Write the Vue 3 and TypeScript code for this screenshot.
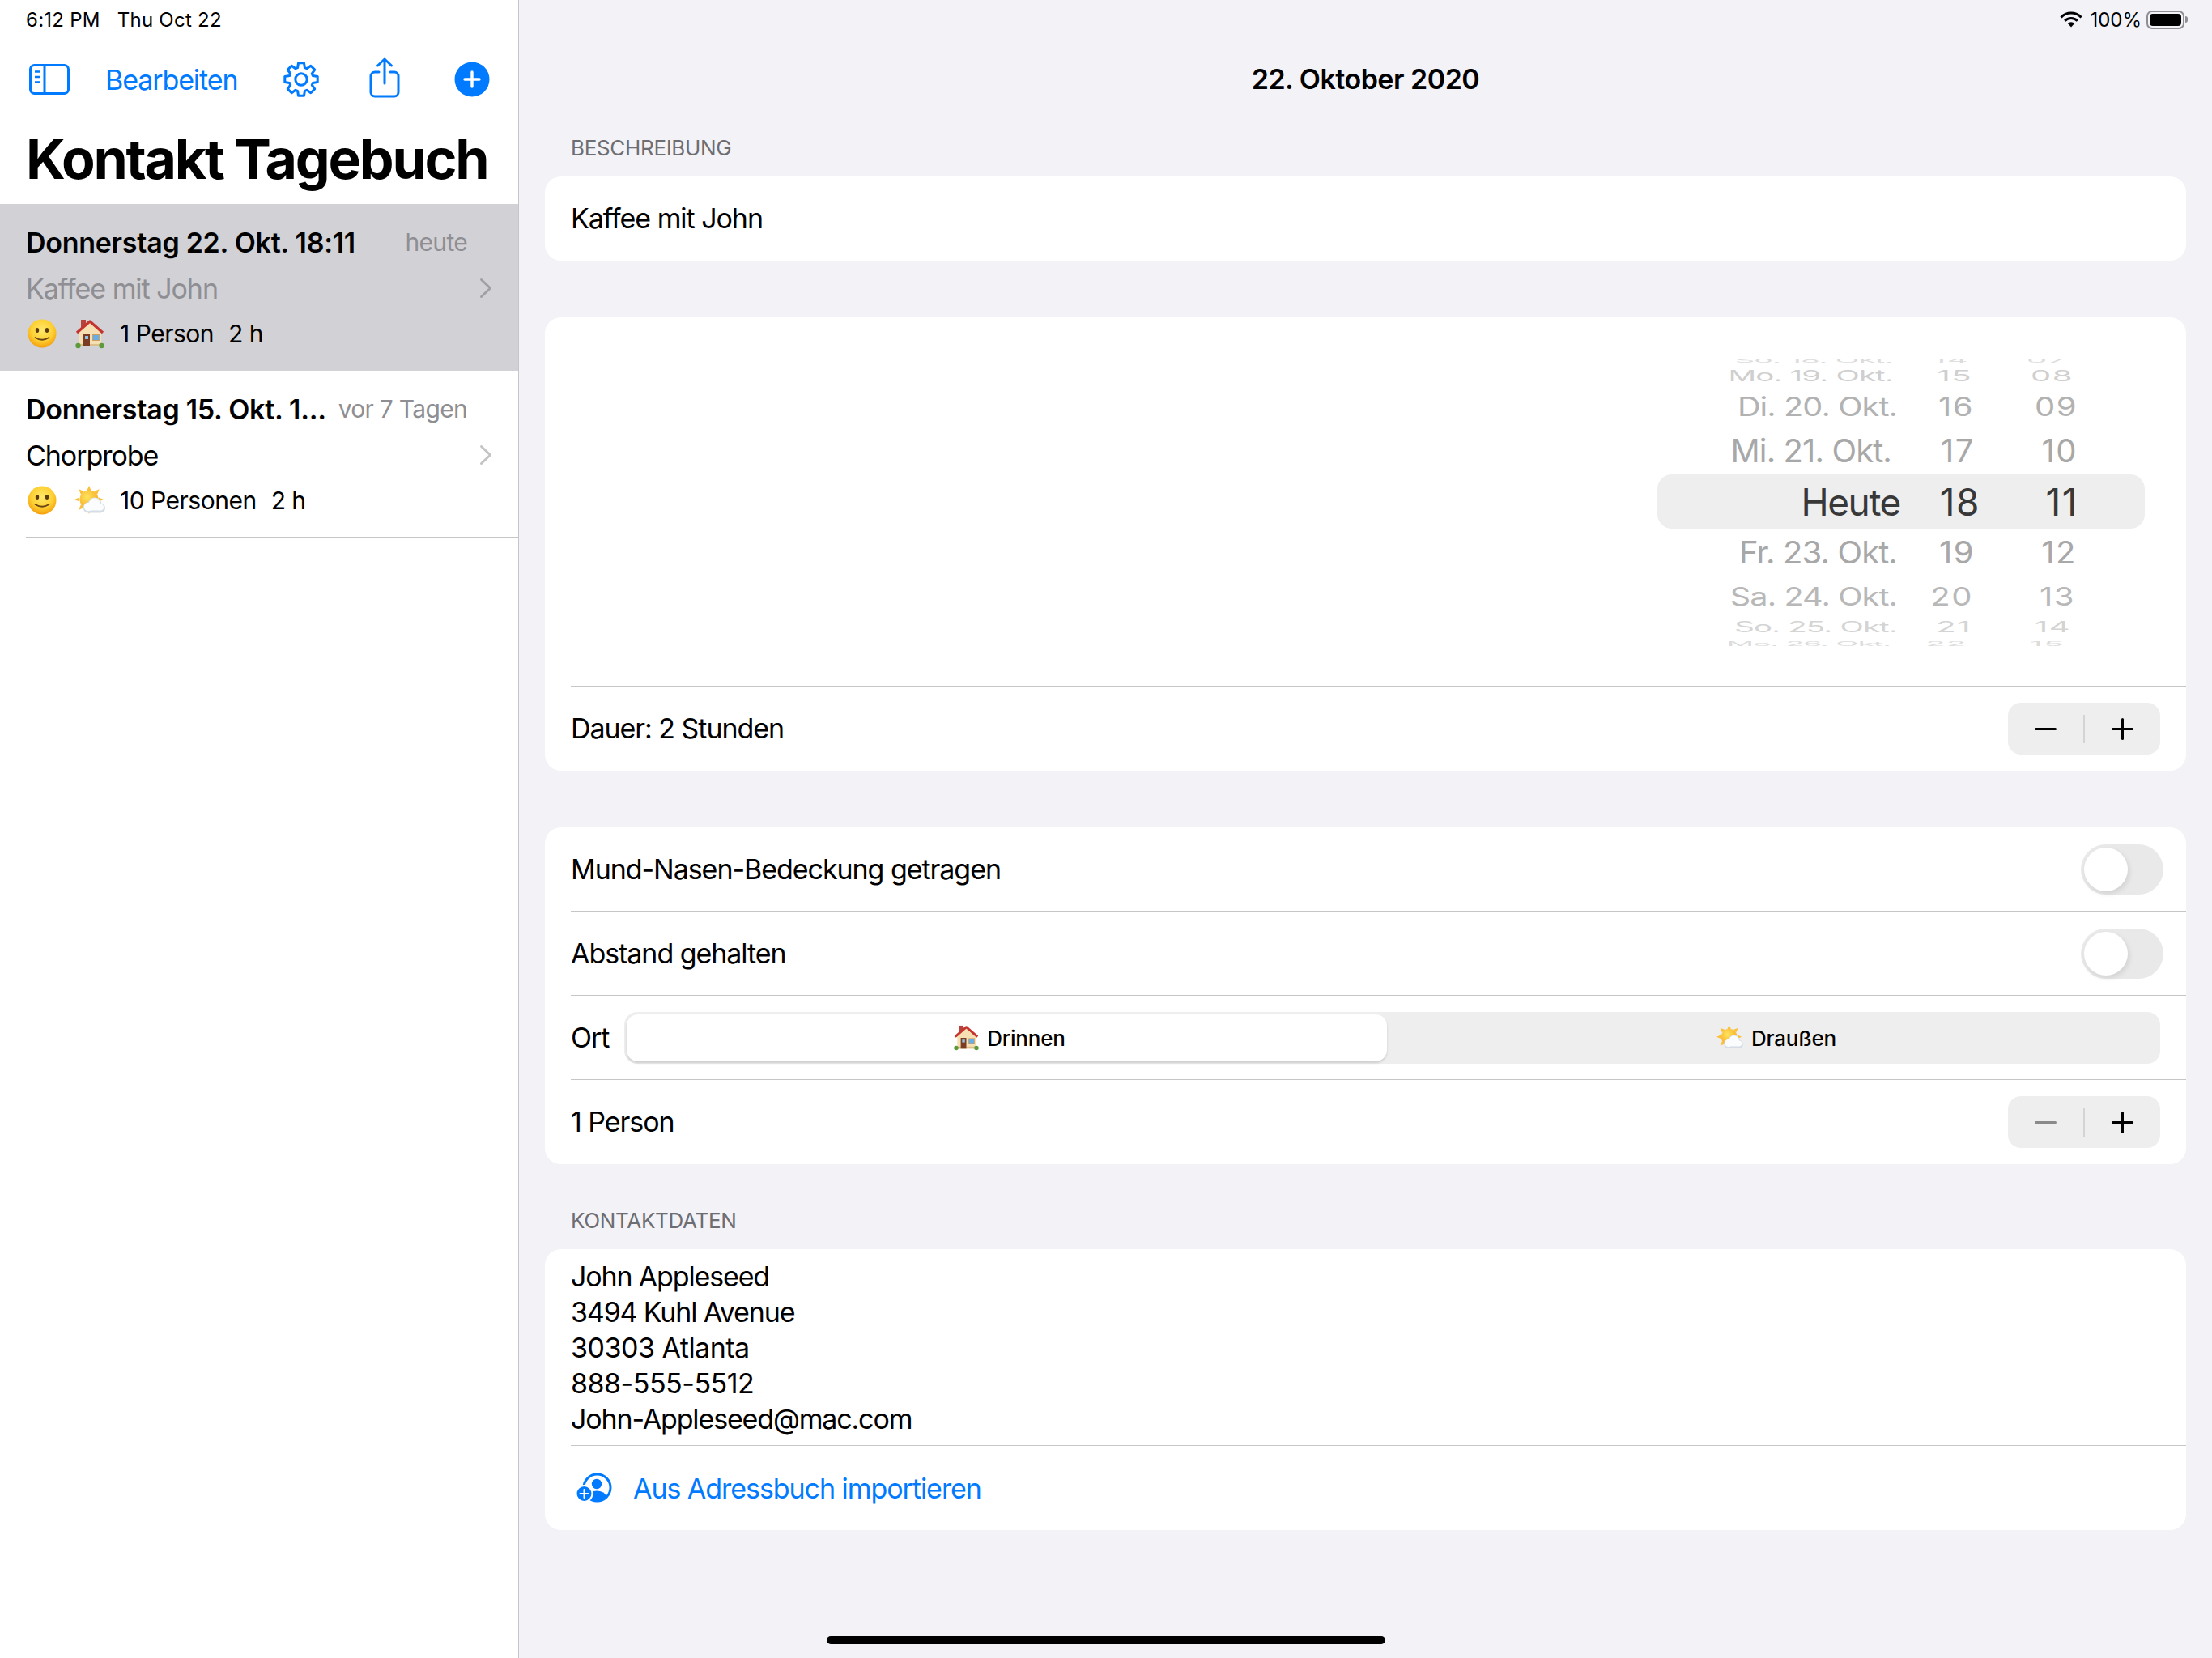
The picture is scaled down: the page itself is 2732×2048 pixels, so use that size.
<template>
    <div class="ipad">
        <!-- shared emoji drawings -->
        <svg class="defs" width="0" height="0" aria-hidden="true">
            <defs>
                <radialGradient id="smileFill" cx="50%" cy="38%" r="62%">
                    <stop offset="0%" stop-color="#ffe86a" />
                    <stop offset="62%" stop-color="#fdd033" />
                    <stop offset="100%" stop-color="#f59e0b" />
                </radialGradient>
                <radialGradient id="sunFill" cx="40%" cy="35%" r="70%">
                    <stop offset="0%" stop-color="#ffe45c" />
                    <stop offset="100%" stop-color="#f7a823" />
                </radialGradient>
                <symbol id="e-smile" viewBox="0 0 36 36">
                    <circle cx="18" cy="18" r="17.5" fill="url(#smileFill)" />
                    <ellipse cx="12" cy="14" rx="2.2" ry="3" fill="#5b3a12" />
                    <ellipse cx="24" cy="14" rx="2.2" ry="3" fill="#5b3a12" />
                    <path d="M9.5 23 Q18 28.5 26.5 23" fill="none" stroke="#6b4415" stroke-width="1.8" stroke-linecap="round" />
                </symbol>
                <symbol id="e-house" viewBox="0 0 36 37">
                    <rect x="7" y="1" width="6" height="10" fill="#b8433c" />
                    <path d="M18 4 L32 16 V34 H5 V16 Z" fill="#f6dfb2" />
                    <rect x="5" y="31" width="27" height="3" fill="#dcc08c" />
                    <path d="M2 17 L18 3 L34 17" fill="none" stroke="#c5352f" stroke-width="3.4" stroke-linejoin="round" />
                    <rect x="10" y="18.5" width="8" height="15.5" fill="#7b3c24" />
                    <rect x="12" y="21" width="4" height="4" fill="#8fc3e8" />
                    <rect x="21" y="19" width="9" height="8" fill="#c99f62" />
                    <rect x="22" y="20" width="7" height="6" fill="#68aee6" />
                    <circle cx="3.5" cy="33" r="3.2" fill="#5d9b3a" />
                    <circle cx="32.5" cy="33" r="3.2" fill="#5d9b3a" />
                </symbol>
                <symbol id="e-sun" viewBox="0 0 38 37">
                    <g fill="#fbbf3a">
                        <path d="M18 0 L20.6 6 H15.4 Z" />
                        <path d="M18 35 L20.6 28 H15.4 Z" />
                        <path d="M0 17 L6 14.4 V19.6 Z" />
                        <path d="M36 17 L30 14.4 V19.6 Z" />
                        <path d="M5.3 4.3 L12 7 L8 11 Z" />
                        <path d="M30.7 4.3 L24 7 L28 11 Z" />
                        <path d="M5.3 29.7 L8 23 L12 27 Z" />
                    </g>
                    <circle cx="18" cy="17" r="11.5" fill="url(#sunFill)" />
                    <g fill="#d5dde6">
                        <circle cx="17" cy="27" r="6.5" />
                        <circle cx="25" cy="23" r="8.5" />
                        <circle cx="32.5" cy="27.5" r="5.5" />
                        <rect x="17" y="27" width="16" height="6.5" />
                    </g>
                    <g fill="#fbfcfe">
                        <circle cx="17" cy="26" r="5.2" />
                        <circle cx="25" cy="22.5" r="7.2" />
                        <circle cx="32" cy="26.5" r="4" />
                        <rect x="17" y="25" width="15" height="5.5" />
                    </g>
                </symbol>
            </defs>
        </svg>

        <aside class="sidebar">
            <div class="status-left">
                <span>6:12 PM</span>
                <span>Thu Oct 22</span>
            </div>
            <div class="toolbar">
                <svg class="tool-sidebar" width="52" height="40" viewBox="0 0 52 40" fill="none" stroke="#007aff" stroke-width="3">
                    <rect x="2.5" y="2.5" width="47" height="35" rx="5" />
                    <path d="M20 2.5 V37.5" />
                    <path d="M8 10.5 H14 M8 17 H14 M8 23.5 H14" stroke-width="2.4" />
                </svg>
                <span class="tool-edit">Bearbeiten</span>
                <svg class="tool-gear" width="48" height="48" viewBox="0 0 48 48" fill="none" stroke="#007aff" stroke-width="3" stroke-linejoin="round">
                    <path :d="gearPath" />
                    <circle cx="24" cy="24" r="7.2" />
                </svg>
                <svg class="tool-share" width="40" height="52" viewBox="0 0 40 52" fill="none" stroke="#007aff" stroke-width="3" stroke-linecap="round" stroke-linejoin="round">
                    <path d="M13 19 H8 a5 5 0 0 0 -5 5 V44 a5 5 0 0 0 5 5 H32 a5 5 0 0 0 5 -5 V24 a5 5 0 0 0 -5 -5 H27" />
                    <path d="M20 33 V4 M11.5 11 L20 3 L28.5 11" />
                </svg>
                <svg class="tool-add" width="44" height="44" viewBox="0 0 44 44">
                    <circle cx="22" cy="22" r="21.5" fill="#007aff" />
                    <path d="M22 13 V31 M13 22 H31" stroke="#fff" stroke-width="3.4" stroke-linecap="round" />
                </svg>
            </div>
            <h1 class="big-title">Kontakt Tagebuch</h1>

            <div v-for="entry in entries" :key="entry.title" class="entry" :class="{ selected: entry.selected }">
                <div class="entry-top">
                    <span class="entry-date">{{ entry.date }}</span>
                    <span class="entry-age">{{ entry.age }}</span>
                </div>
                <div class="entry-middle">
                    <span class="entry-title">{{ entry.title }}</span>
                    <svg class="chevron" width="16" height="26" viewBox="0 0 16 26" fill="none" stroke-width="3" stroke-linecap="round" stroke-linejoin="round">
                        <path d="M2.5 2.5 L13.5 13 L2.5 23.5" />
                    </svg>
                </div>
                <div class="entry-bottom">
                    <svg class="emoji-smile"><use href="#e-smile" /></svg>
                    <svg class="emoji-place"><use :href="entry.place" /></svg>
                    <span class="entry-people">{{ entry.people }}</span>
                    <span>{{ entry.hours }}</span>
                </div>
            </div>
        </aside>

        <main class="detail">
            <div class="status-right">
                <svg width="28" height="20" viewBox="0 0 28 20">
                    <g fill="none" stroke="#000" stroke-width="3">
                        <path d="M1.5 7.5 A17 17 0 0 1 26.5 7.5" />
                        <path d="M6.2 11.7 A11 11 0 0 1 21.8 11.7" />
                    </g>
                    <path d="M14 19.5 L9.8 15 A6 6 0 0 1 18.2 15 Z" fill="#000" />
                </svg>
                <span>100%</span>
                <div class="battery"><div class="battery-fill"></div></div>
                <div class="battery-nub"></div>
            </div>
            <div class="nav-title">22. Oktober 2020</div>

            <div class="content">
                <div class="section-head first">BESCHREIBUNG</div>
                <section class="card">
                    <div class="row first-row"><span>Kaffee mit John</span></div>
                </section>

                <section class="card spaced">
                    <div class="picker">
                        <div class="wheel">
                            <div class="wheel-band"></div>
                            <div v-for="item in wheel" :key="item.day" class="wheel-row" :style="{ height: item.height + 'px', color: item.color }">
                                <span :class="{ current: item.current }" :style="cellStyle(item, item.edges[0] - 2345, item.stretch)">{{ item.day }}</span>
                                <span class="num" :class="{ current: item.current }" :style="cellStyle(item, item.edges[1] - 2444)">{{ item.hour }}</span>
                                <span class="num" :class="{ current: item.current }" :style="cellStyle(item, item.edges[2] - 2565)">{{ item.minute }}</span>
                            </div>
                        </div>
                    </div>
                    <div class="row">
                        <span>Dauer: 2 Stunden</span>
                        <div class="stepper">
                            <button class="step"><span class="minus"></span></button>
                            <i class="step-line"></i>
                            <button class="step"><span class="plus"></span></button>
                        </div>
                    </div>
                </section>

                <section class="card spaced-more">
                    <div class="row first-row">
                        <span>Mund-Nasen-Bedeckung getragen</span>
                        <div class="toggle"><div class="knob"></div></div>
                    </div>
                    <div class="row">
                        <span>Abstand gehalten</span>
                        <div class="toggle"><div class="knob"></div></div>
                    </div>
                    <div class="row">
                        <span>Ort</span>
                        <div class="segments">
                            <div class="segment active">
                                <svg class="seg-house"><use href="#e-house" /></svg>
                                <span>Drinnen</span>
                            </div>
                            <div class="segment">
                                <svg class="seg-sun"><use href="#e-sun" /></svg>
                                <span>Draußen</span>
                            </div>
                        </div>
                    </div>
                    <div class="row">
                        <span>1 Person</span>
                        <div class="stepper">
                            <button class="step"><span class="minus off"></span></button>
                            <i class="step-line"></i>
                            <button class="step"><span class="plus"></span></button>
                        </div>
                    </div>
                </section>

                <div class="section-head">KONTAKTDATEN</div>
                <section class="card">
                    <div class="address">
                        <div v-for="line in address" :key="line.text" :class="{ digits: line.digits }">{{ line.text }}</div>
                    </div>
                    <div class="row import-row">
                        <svg width="44" height="38" viewBox="0 0 44 38">
                            <circle cx="25.5" cy="18.5" r="16.5" fill="none" stroke="#007aff" stroke-width="3" />
                            <circle cx="25" cy="14" r="6.2" fill="#007aff" />
                            <path d="M13.5 29 Q16 22.5 25 22.5 Q34 22.5 37 29 A16.5 16.5 0 0 1 13.5 29 Z" fill="#007aff" />
                            <circle cx="9.5" cy="26" r="11" fill="#fff" />
                            <circle cx="9.5" cy="26" r="9" fill="#007aff" />
                            <path d="M9.5 21 V31 M4.5 26 H14.5" stroke="#fff" stroke-width="2" stroke-linecap="round" />
                        </svg>
                        <span>Aus Adressbuch importieren</span>
                    </div>
                </section>
            </div>
        </main>

        <div class="home-bar"></div>
    </div>
</template>

<script setup lang="ts">
interface WheelItem {
    day: string;
    hour: string;
    minute: string;
    height: number;
    squash: number;
    stretch: number;
    color: string;
    edges: [number, number, number];
    current?: boolean;
}

const entries = [
    {
        date: "Donnerstag 22. Okt. 18:11",
        age: "heute",
        title: "Kaffee mit John",
        place: "#e-house",
        people: "1 Person",
        hours: "2 h",
        selected: true,
    },
    {
        date: "Donnerstag 15. Okt. 1...",
        age: "vor 7 Tagen",
        title: "Chorprobe",
        place: "#e-sun",
        people: "10 Personen",
        hours: "2 h",
        selected: false,
    },
];

const address = [
    { text: "John Appleseed", digits: false },
    { text: "3494 Kuhl Avenue", digits: false },
    { text: "30303 Atlanta", digits: true },
    { text: "888-555-5512", digits: true },
    { text: "John-Appleseed@mac.com", digits: false },
];

// row heights and squash fake the cylinder of the date wheel
const wheel: WheelItem[] = [
    { day: "So. 18. Okt.", hour: "14", minute: "07", height: 4, squash: 0.2, stretch: 0.97, color: "#dcdcdc", edges: [2338, 2430, 2551] },
    { day: "Mo. 19. Okt.", hour: "15", minute: "08", height: 34, squash: 0.48, stretch: 0.96, color: "#cfcfcf", edges: [2338, 2434, 2559] },
    { day: "Di. 20. Okt.", hour: "16", minute: "09", height: 44, squash: 0.82, stretch: 0.99, color: "#b2b2b2", edges: [2343, 2436, 2564] },
    { day: "Mi. 21. Okt.", hour: "17", minute: "10", height: 64, squash: 1, stretch: 1, color: "#a8a8a8", edges: [2336, 2437, 2564] },
    { day: "Heute", hour: "18", minute: "11", height: 62, squash: 1, stretch: 1, color: "#383838", edges: [2347, 2444, 2565], current: true },
    { day: "Fr. 23. Okt.", hour: "19", minute: "12", height: 64, squash: 0.96, stretch: 1, color: "#a8a8a8", edges: [2343, 2437, 2563] },
    { day: "Sa. 24. Okt.", hour: "20", minute: "13", height: 44, squash: 0.78, stretch: 0.99, color: "#b8b8b8", edges: [2343, 2435, 2561] },
    { day: "So. 25. Okt.", hour: "21", minute: "14", height: 32, squash: 0.46, stretch: 0.96, color: "#d4d4d4", edges: [2343, 2433, 2556] },
    { day: "Mo. 26. Okt.", hour: "22", minute: "15", height: 8, squash: 0.18, stretch: 0.92, color: "#dcdcdc", edges: [2335, 2428, 2548] },
];

const cellStyle = (item: WheelItem, shift: number, stretch = 1) => ({
    transform: `translateX(${shift}px) scale(${stretch}, ${item.squash})`,
});

// 8 teeth, first one pointing straight up
const makeGear = (): string => {
    const outer = 20.5;
    const inner = 15;
    const point = (r: number, a: number) => `${(24 + r * Math.cos(a)).toFixed(2)} ${(24 + r * Math.sin(a)).toFixed(2)}`;
    let d = "";
    for (let i = 0; i < 8; i++) {
        const a = (i * Math.PI) / 4 - Math.PI / 2;
        d += `${i === 0 ? "M" : `A${inner} ${inner} 0 0 1 `}${point(inner, a - 0.3)} `;
        d += `L${point(outer, a - 0.17)} L${point(outer, a + 0.17)} L${point(inner, a + 0.3)} `;
    }
    return `${d}A${inner} ${inner} 0 0 1 ${point(inner, -Math.PI / 2 - 0.3)} Z`;
};

const gearPath = makeGear();
</script>

<style scoped>
.ipad {
    position: relative;
    display: flex;
    width: 2732px;
    height: 2048px;
    overflow: hidden;
    background: #f2f2f7;
    color: #000;
    font-family: Inter, "Noto Sans", sans-serif;
    font-size: 34px;
}

.defs {
    position: absolute;
}

.sidebar {
    flex: 0 0 641px;
    box-sizing: border-box;
    background: #fff;
    border-right: 1px solid #c6c6c8;
}

.status-left {
    display: flex;
    gap: 21px;
    align-items: center;
    height: 48px;
    padding-left: 32px;
    font-size: 24px;
    letter-spacing: 0.25px;
}

.toolbar {
    display: flex;
    align-items: center;
    height: 100px;
    padding-left: 35px;
    color: #007aff;
}

.tool-edit {
    width: 163px;
    margin-left: 43px;
    letter-spacing: -1.1px;
    white-space: nowrap;
}

.tool-gear {
    margin-left: 55px;
}

.tool-share {
    margin-left: 59px;
    margin-top: -4px;
}

.tool-add {
    margin-left: 66px;
}

.big-title {
    height: 104px;
    margin: 0;
    padding-left: 32px;
    font-size: 68px;
    font-weight: 700;
    line-height: 96px;
    letter-spacing: -2.25px;
    white-space: nowrap;
}

.entry {
    display: grid;
    grid-template-rows: 40px 40px 40px;
    row-gap: 16px;
    height: 206px;
    box-sizing: border-box;
    padding: 28px 32px 0;
}

.entry + .entry {
    border-bottom: 1px solid #c6c6c8;
    margin-left: 32px;
    padding-left: 0;
    padding-right: 32px;
}

.entry.selected {
    background: #d1d1d6;
}

.entry-top {
    display: flex;
    align-items: center;
    justify-content: space-between;
    margin-top: -2px;
    padding-right: 31px;
}

.entry-date {
    font-weight: 600;
    letter-spacing: -0.27px;
    white-space: nowrap;
}

.entry-age {
    color: #8e8e93;
    font-size: 30px;
    letter-spacing: -0.7px;
}

.entry-middle {
    display: flex;
    align-items: center;
    justify-content: space-between;
    letter-spacing: -1.05px;
}

.chevron {
    stroke: #c4c4c7;
}

.selected .chevron {
    stroke: #a0a0a5;
}

.entry.selected .entry-title {
    color: #8e8e93;
}

.entry-bottom {
    display: flex;
    align-items: center;
    font-size: 30px;
    letter-spacing: -0.5px;
}

.emoji-smile {
    width: 36px;
    height: 36px;
    margin-left: 2px;
}

.emoji-place {
    width: 38px;
    height: 37px;
    margin-left: 22px;
}

.entry-people {
    margin-left: 18px;
    margin-right: 18px;
}

.detail {
    flex: 1;
    min-width: 0;
}

.status-right {
    display: flex;
    align-items: center;
    justify-content: flex-end;
    height: 48px;
    padding-right: 30px;
    font-size: 24px;
}

.status-right span {
    margin-left: 9px;
    margin-right: 6px;
}

.battery {
    box-sizing: border-box;
    width: 47px;
    height: 23px;
    padding: 2px;
    border: 2px solid #8e8e93;
    border-radius: 7px;
}

.battery-fill {
    height: 100%;
    background: #000;
    border-radius: 4px;
}

.battery-nub {
    width: 3px;
    height: 8px;
    margin-left: 1px;
    background: #8e8e93;
    border-radius: 0 3px 3px 0;
}

.nav-title {
    height: 100px;
    font-weight: 600;
    line-height: 100px;
    text-align: center;
    letter-spacing: -0.5px;
}

.content {
    padding: 0 32px;
}

.section-head {
    display: flex;
    align-items: flex-end;
    box-sizing: border-box;
    height: 105px;
    padding: 0 0 17px 32px;
    color: #6d6d72;
    font-size: 26px;
    line-height: 36px;
    letter-spacing: -0.33px;
}

.section-head.first {
    height: 70px;
}

.card {
    overflow: hidden;
    background: #fff;
    border-radius: 20px;
}

.spaced {
    margin-top: 70px;
}

.spaced-more {
    margin-top: 70px;
}

.row {
    display: flex;
    align-items: center;
    justify-content: space-between;
    box-sizing: border-box;
    height: 104px;
    margin-left: 32px;
    padding-right: 32px;
    box-shadow: 0 -1px 0 #c6c6c8;
    letter-spacing: -1.05px;
}

.row > span:first-child {
    padding-bottom: 2px;
}

.first-row {
    box-shadow: none;
}

.picker {
    height: 456px;
    box-sizing: border-box;
    padding: 51px 51px 0 0;
}

.wheel {
    position: relative;
    width: 602px;
    height: 356px;
    margin-left: auto;
    overflow: hidden;
    font-size: 40px;
    letter-spacing: -0.9px;
}

.wheel-band {
    position: absolute;
    top: 143px;
    left: 0;
    right: 0;
    height: 67px;
    background: #eeeeef;
    border-radius: 18px;
}

.wheel-row {
    position: relative;
    display: grid;
    grid-template-columns: 298px 99px 121px;
    align-items: center;
    text-align: right;
    white-space: nowrap;
    line-height: 1;
}

.wheel-row span {
    display: block;
    line-height: 0;
    transform-origin: right center;
}

.wheel-row .current {
    font-size: 46px;
    letter-spacing: -1.4px;
}

.wheel-row .num {
    margin-right: -2px;
    letter-spacing: 1.5px;
}

.stepper {
    display: flex;
    align-items: center;
    width: 188px;
    height: 64px;
    background: #eeeeef;
    border-radius: 16px;
}

.step {
    display: flex;
    align-items: center;
    justify-content: center;
    flex: 1;
    height: 100%;
    padding: 0;
    border: 0;
    background: none;
}

.step-line {
    width: 2px;
    height: 35px;
    background: #d4d4d6;
}

.minus {
    width: 27px;
    height: 3px;
    background: #000;
    border-radius: 2px;
}

.minus.off {
    background: #8a8a8a;
}

.plus {
    position: relative;
    width: 27px;
    height: 3px;
    background: #000;
    border-radius: 2px;
}

.plus::after {
    content: "";
    position: absolute;
    top: -12px;
    left: 12px;
    width: 3px;
    height: 27px;
    background: #000;
    border-radius: 2px;
}

.toggle {
    box-sizing: border-box;
    width: 102px;
    height: 62px;
    margin-right: -4px;
    padding: 4px;
    background: #e9e9ea;
    border-radius: 31px;
}

.knob {
    width: 54px;
    height: 54px;
    background: #fff;
    border-radius: 50%;
    box-shadow: 2px 3px 6px rgba(0, 0, 0, 0.1);
}

.segments {
    display: flex;
    flex: 0 0 1897px;
    box-sizing: border-box;
    height: 64px;
    padding: 3px;
    background: #eeeeef;
    border-radius: 16px;
}

.segment {
    display: flex;
    flex: 1;
    align-items: center;
    justify-content: center;
    gap: 10px;
    padding-left: 10px;
    font-size: 26px;
    font-weight: 500;
    letter-spacing: -0.2px;
}

.segment.active {
    flex: 0 0 939px;
    box-sizing: border-box;
    padding-left: 7px;
    background: #fff;
    border-radius: 14px;
    box-shadow: 0 2px 3px rgba(0, 0, 0, 0.14);
}

.seg-house {
    width: 31px;
    height: 32px;
}

.seg-sun {
    width: 33px;
    height: 32px;
}

.address {
    padding: 12px 0 11px 32px;
    line-height: 44px;
    letter-spacing: -1.15px;
}

.address .digits {
    letter-spacing: -0.5px;
}

.import-row {
    justify-content: flex-start;
    gap: 26px;
    padding-left: 7px;
    color: #007aff;
}

.home-bar {
    position: absolute;
    left: 1021px;
    top: 2021px;
    width: 690px;
    height: 10px;
    background: #000;
    border-radius: 5px;
}
</style>

<style>
body {
    margin: 0;
}
</style>
